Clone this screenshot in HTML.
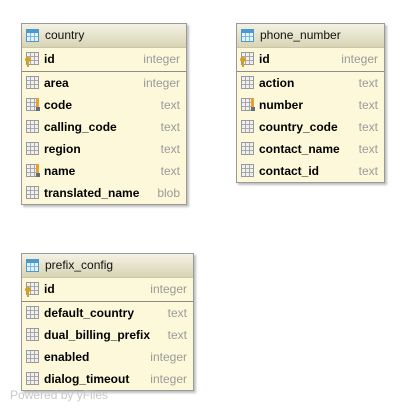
<!DOCTYPE html><html><head><style>
body{margin:0;width:406px;height:411px;background:#fff;position:relative;font-family:"Liberation Sans",sans-serif;overflow:hidden}
.t{position:absolute;background:#fcf8d9;border:1px solid #9a9a9a;box-shadow:2px 2px 2px rgba(0,0,0,.25)}
.h{height:23px;background:linear-gradient(#f4f2e4,#d8d4b4);border-bottom:1px solid #c9c6a8;font-size:12px;line-height:23px;padding-left:23px;position:relative;color:#111}
.r{height:22px;line-height:22px;font-size:12px;font-weight:bold;padding-left:22px;position:relative;color:#000}
.r span{position:absolute;right:6px;font-weight:normal;color:#9a9a9a}
.sep{border-bottom:1px solid #8c8c8c;height:23px;line-height:23px}
.i{position:absolute;left:4px;top:4px;width:13px;height:13px;border:1px solid #9a9a9a;background:
linear-gradient(90deg,transparent 3px,#a8a8a8 3px,#a8a8a8 4px,transparent 4px,transparent 7px,#a8a8a8 7px,#a8a8a8 8px,transparent 8px),
linear-gradient(transparent 3px,#a8a8a8 3px,#a8a8a8 4px,transparent 4px,transparent 7px,#a8a8a8 7px,#a8a8a8 8px,transparent 8px),#f0f0f0;box-sizing:border-box}
.h .i{border-color:#4a9ad0;top:5px;background:linear-gradient(#4a9ad0 0 3px,transparent 3px),
linear-gradient(90deg,transparent 3px,#7ab8e0 3px,#7ab8e0 4px,transparent 4px,transparent 7px,#7ab8e0 7px,#7ab8e0 8px,transparent 8px),
linear-gradient(transparent 6px,#7ab8e0 6px,#7ab8e0 7px,transparent 7px),#e4f2fb}
.k{position:absolute;left:3px;top:9px;width:6px;height:5px;border-radius:50%;background:#d6a021}
.k:after{content:"";position:absolute;left:2px;top:4px;width:2px;height:6px;background:#d6a021}
.x{position:absolute;left:14px;top:4px;width:3px;height:10px;background:#e8a030}
.x:after{content:"";position:absolute;left:0;top:9px;width:4px;height:4px;background:#607080}
.pw{position:absolute;left:10px;top:388px;font-size:12px;color:#c8c8c8}
</style></head><body>
<div class="t" style="left:21px;top:23px;width:164px">
<div class="h"><div class="i"></div>country</div>
<div class="r sep"><div class="i"></div><div class="k"></div>id<span>integer</span></div>
<div class="r"><div class="i"></div>area<span>integer</span></div>
<div class="r"><div class="i"></div><div class="x"></div>code<span>text</span></div>
<div class="r"><div class="i"></div>calling_code<span>text</span></div>
<div class="r"><div class="i"></div>region<span>text</span></div>
<div class="r"><div class="i"></div><div class="x"></div>name<span>text</span></div>
<div class="r"><div class="i"></div>translated_name<span>blob</span></div>
</div>
<div class="t" style="left:236px;top:23px;width:147px">
<div class="h"><div class="i"></div>phone_number</div>
<div class="r sep"><div class="i"></div><div class="k"></div>id<span>integer</span></div>
<div class="r"><div class="i"></div>action<span>text</span></div>
<div class="r"><div class="i"></div><div class="x"></div>number<span>text</span></div>
<div class="r"><div class="i"></div>country_code<span>text</span></div>
<div class="r"><div class="i"></div>contact_name<span>text</span></div>
<div class="r"><div class="i"></div>contact_id<span>text</span></div>
</div>
<div class="t" style="left:21px;top:253px;width:171px">
<div class="h"><div class="i"></div>prefix_config</div>
<div class="r sep"><div class="i"></div><div class="k"></div>id<span>integer</span></div>
<div class="r"><div class="i"></div>default_country<span>text</span></div>
<div class="r"><div class="i"></div>dual_billing_prefix<span>text</span></div>
<div class="r"><div class="i"></div>enabled<span>integer</span></div>
<div class="r"><div class="i"></div>dialog_timeout<span>integer</span></div>
</div>
<div class="pw">Powered by yFiles</div>
</body></html>
